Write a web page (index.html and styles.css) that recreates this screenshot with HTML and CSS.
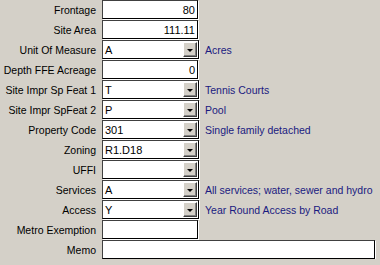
FILE: index.html
```html
<!DOCTYPE html>
<html lang="en">
<head>
    <meta charset="UTF-8">
    <title>Site Details</title>
    <link rel="stylesheet" href="styles.css">
</head>
<body>
    <div class="form">
        <div class="label">Frontage</div>
        <div class="field num">80</div>
        <div class="desc"></div>

        <div class="label">Site Area</div>
        <div class="field num">111.11</div>
        <div class="desc"></div>

        <div class="label">Unit Of Measure</div>
        <div class="field combo"><span class="val">A</span><span class="btn"><span class="arrow"></span></span></div>
        <div class="desc">Acres</div>

        <div class="label">Depth FFE Acreage</div>
        <div class="field num">0</div>
        <div class="desc"></div>

        <div class="label">Site Impr Sp Feat 1</div>
        <div class="field combo"><span class="val">T</span><span class="btn"><span class="arrow"></span></span></div>
        <div class="desc">Tennis Courts</div>

        <div class="label">Site Impr SpFeat 2</div>
        <div class="field combo"><span class="val">P</span><span class="btn"><span class="arrow"></span></span></div>
        <div class="desc">Pool</div>

        <div class="label">Property Code</div>
        <div class="field combo"><span class="val">301</span><span class="btn"><span class="arrow"></span></span></div>
        <div class="desc">Single family detached</div>

        <div class="label">Zoning</div>
        <div class="field combo"><span class="val">R1.D18</span><span class="btn"><span class="arrow"></span></span></div>
        <div class="desc"></div>

        <div class="label">UFFI</div>
        <div class="field combo"><span class="val"></span><span class="btn"><span class="arrow"></span></span></div>
        <div class="desc"></div>

        <div class="label">Services</div>
        <div class="field combo"><span class="val">A</span><span class="btn"><span class="arrow"></span></span></div>
        <div class="desc">All services; water, sewer and hydro</div>

        <div class="label">Access</div>
        <div class="field combo"><span class="val">Y</span><span class="btn"><span class="arrow"></span></span></div>
        <div class="desc">Year Round Access by Road</div>

        <div class="label">Metro Exemption</div>
        <div class="field"></div>
        <div class="desc"></div>

        <div class="label">Memo</div>
        <div class="field memo"></div>
    </div>
</body>
</html>
```

FILE: styles.css
```css
body {
    margin: 0;
    background-color: #d4d0c8;
    font-family: 'Liberation Sans', Arial, sans-serif;
    font-size: 10.5px;
    color: #000;
}

.form {
    display: grid;
    grid-template-columns: 96px 97px minmax(0, 1fr);
    grid-auto-rows: 19px;
    column-gap: 6px;
    row-gap: 1px;
    padding: 0 5px 0 0;
}

.label {
    display: flex;
    align-items: center;
    justify-content: flex-end;
    white-space: nowrap;
}

.field {
    box-sizing: border-box;
    background-color: #fff;
    border: 1px solid #000;
    border-top-color: #404040;
    border-left-color: #404040;
    box-shadow: 1px 1px 0 #fff;
    display: flex;
    align-items: center;
    padding: 0 2px;
    width: 96px;
    font-size: 11px;
}

.num {
    justify-content: flex-end;
}

.combo {
    width: 97px;
    padding: 0 1px 0 2px;
}

.val {
    flex: 1;
}

.btn {
    box-sizing: border-box;
    width: 14px;
    height: 15px;
    background-color: #d4d0c8;
    border: 1px solid;
    border-color: #fff #404040 #404040 #fff;
    box-shadow: inset -1px -1px 0 #808080;
    display: flex;
    align-items: center;
    justify-content: center;
}

.arrow {
    width: 0;
    height: 0;
    border-left: 3px solid transparent;
    border-right: 3px solid transparent;
    border-top: 3px solid #000;
    margin-top: 1px;
}

.desc {
    display: flex;
    align-items: center;
    color: #1a1a80;
    white-space: nowrap;
}

.memo {
    grid-column: 2 / 4;
    width: auto;
}
```
